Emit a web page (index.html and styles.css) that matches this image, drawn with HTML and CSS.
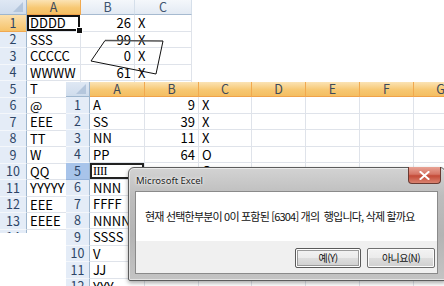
FILE: index.html
```html
<!DOCTYPE html>
<html lang="ko">
<head>
<meta charset="utf-8">
<link rel="stylesheet" href="styles.css">
</head>
<body>
<div class="page">
  <div class="sheet back">
    <div class="corner"><span class="tri"></span></div>
    <div class="ch sel">A</div><div class="ch">B</div><div class="ch">C</div>

    <div class="rh sel">1</div><div class="c a1">DDDD</div><div class="c n">26</div><div class="c">X</div>
    <div class="rh">2</div><div class="c">SSS</div><div class="c n">99</div><div class="c">X</div>
    <div class="rh">3</div><div class="c">CCCCC</div><div class="c n">0</div><div class="c">X</div>
    <div class="rh">4</div><div class="c">WWWW</div><div class="c n">61</div><div class="c">X</div>
    <div class="rh">5</div><div class="c">T</div><div class="c"></div><div class="c"></div>
    <div class="rh">6</div><div class="c">@</div><div class="c"></div><div class="c"></div>
    <div class="rh">7</div><div class="c">EEE</div><div class="c"></div><div class="c"></div>
    <div class="rh">8</div><div class="c">TT</div><div class="c"></div><div class="c"></div>
    <div class="rh">9</div><div class="c">W</div><div class="c"></div><div class="c"></div>
    <div class="rh">10</div><div class="c">QQ</div><div class="c"></div><div class="c"></div>
    <div class="rh">11</div><div class="c">YYYYY</div><div class="c"></div><div class="c"></div>
    <div class="rh">12</div><div class="c">EEE</div><div class="c"></div><div class="c"></div>
    <div class="rh">13</div><div class="c">EEEE</div><div class="c"></div><div class="c"></div>
    <div class="rh">14</div><div class="c">Z</div><div class="c"></div><div class="c"></div>
  </div>

  <svg class="shape" width="444" height="286" viewBox="0 0 444 286">
    <polyline points="105,40.5 163,41" fill="none" stroke="#555" stroke-width="1.6"/>
    <polyline points="163,41 156,74 91,61 105,40.5" fill="none" stroke="#111" stroke-width="1"/>
  </svg>

  <div class="sheet front">
    <div class="corner"><span class="tri"></span></div>
    <div class="ch sel">A</div><div class="ch sel">B</div><div class="ch sel">C</div><div class="ch sel">D</div><div class="ch sel">E</div><div class="ch sel">F</div><div class="ch sel">G</div>

    <div class="rh">1</div><div class="c">A</div><div class="c n">9</div><div class="c">X</div><div class="c"></div><div class="c"></div><div class="c"></div><div class="c"></div>
    <div class="rh">2</div><div class="c">SS</div><div class="c n">39</div><div class="c">X</div><div class="c"></div><div class="c"></div><div class="c"></div><div class="c"></div>
    <div class="rh">3</div><div class="c">NN</div><div class="c n">11</div><div class="c">X</div><div class="c"></div><div class="c"></div><div class="c"></div><div class="c"></div>
    <div class="rh">4</div><div class="c">PP</div><div class="c n">64</div><div class="c">O</div><div class="c"></div><div class="c"></div><div class="c"></div><div class="c"></div>
    <div class="rh act">5</div><div class="c a5">IIII</div><div class="c"></div><div class="c">O</div><div class="c"></div><div class="c"></div><div class="c"></div><div class="c"></div>
    <div class="rh">6</div><div class="c">NNN</div><div class="c"></div><div class="c"></div><div class="c"></div><div class="c"></div><div class="c"></div><div class="c"></div>
    <div class="rh">7</div><div class="c">FFFF</div><div class="c"></div><div class="c"></div><div class="c"></div><div class="c"></div><div class="c"></div><div class="c"></div>
    <div class="rh">8</div><div class="c">NNNNN</div><div class="c"></div><div class="c"></div><div class="c"></div><div class="c"></div><div class="c"></div><div class="c"></div>
    <div class="rh">9</div><div class="c">SSSS</div><div class="c"></div><div class="c"></div><div class="c"></div><div class="c"></div><div class="c"></div><div class="c"></div>
    <div class="rh">10</div><div class="c">V</div><div class="c"></div><div class="c"></div><div class="c"></div><div class="c"></div><div class="c"></div><div class="c"></div>
    <div class="rh">11</div><div class="c">JJ</div><div class="c"></div><div class="c"></div><div class="c"></div><div class="c"></div><div class="c"></div><div class="c"></div>
    <div class="rh">12</div><div class="c">YYY</div><div class="c"></div><div class="c"></div><div class="c"></div><div class="c"></div><div class="c"></div><div class="c"></div>
  </div>

  <div class="dialog">
    <div class="titlebar">
      <span class="title">Microsoft Excel</span>
      <div class="close"><svg width="11" height="9" viewBox="0 0 11 9"><path d="M1.5 1 L9.5 8 M9.5 1 L1.5 8" stroke="#fff" stroke-width="2" stroke-linecap="square"/></svg></div>
    </div>
    <div class="client">
      <div class="msg">현재 선택한부분이 0이 포함된 [6304] 개의&nbsp;&nbsp;행입니다, 삭제 할까요</div>
      <div class="btns">
        <div class="btn def">예(Y)</div>
        <div class="btn">아니요(N)</div>
      </div>
    </div>
  </div>
</div>
</body>
</html>
```

FILE: styles.css
```css
* { box-sizing: border-box; }
html, body { margin: 0; padding: 0; }
body {
  width: 444px;
  height: 286px;
  overflow: hidden;
  background: #fff;
  font-family: "Noto Sans CJK KR", "Noto Sans", sans-serif;
}
.page {
  position: relative;
  width: 444px;
  height: 286px;
  overflow: hidden;
}
.sheet {
  display: grid;
  grid-template-rows: 15px;
  grid-auto-rows: 16.5px;
  background: #fff;
  overflow: hidden;
  font-size: 13px;
  line-height: 1;
  color: #000;
}
.back {
  grid-template-columns: 27px 54px 54px 57px;
  width: 192px;
  height: 233px;
}
.front {
  position: absolute;
  left: 66px;
  top: 82px;
  width: 378px;
  height: 204px;
  grid-template-columns: 24px 55px 54px 53px 54px 54px 54px 54px;
}
.corner {
  position: relative;
  background: linear-gradient(#dfe8f4, #cfdcec);
  border-right: 1px solid #9eb6ce;
  border-bottom: 1px solid #9eb6ce;
}
.tri {
  position: absolute;
  right: 3px;
  bottom: 2px;
  width: 0;
  height: 0;
  border-left: 10px solid transparent;
  border-bottom: 10px solid #b4c6dc;
}
.ch {
  display: flex;
  align-items: center;
  justify-content: center;
  background: linear-gradient(#f4f7fb, #e3eaf3);
  border-right: 1px solid #d5dfea;
  border-bottom: 1px solid #a6bad0;
  color: #3f5470;
  font-size: 12.5px;
  line-height: 1;
}
.ch.sel {
  background: linear-gradient(#fbe3b5, #f7c873 55%, #f4be62);
  border-right: 1px solid #f1a94e;
  border-bottom: 1px solid #f0a24a;
  color: #3d4a5a;
}
.rh {
  display: flex;
  align-items: center;
  justify-content: center;
  background: #e4ecf7;
  border-right: 1px solid #9eb6ce;
  border-bottom: 1px solid #f4f7fb;
  color: #2d4566;
  font-size: 12.5px;
  line-height: 1;
}
.rh.sel {
  background: linear-gradient(#fbe0ad, #f6c36a);
  border-bottom: 1px solid #f0a850;
}
.rh.act {
  background: #a8c4ea;
  border-bottom: 1px solid #94b2da;
}
.c {
  display: flex;
  align-items: center;
  padding: 0 2px 0 3px;
  border-right: 1px solid #dfe3ea;
  border-bottom: 1px solid #dfe3ea;
  white-space: nowrap;
  overflow: visible;
  line-height: 1;
}
.c.n { justify-content: flex-end; padding-right: 3px; }
.a1 {
  position: relative;
  box-shadow: inset 0 0 0 2px #111;
  border-right-color: transparent;
}
.a1::after {
  content: "";
  position: absolute;
  right: -3px;
  bottom: -3px;
  width: 5px;
  height: 5px;
  background: #111;
  border: 1px solid #fff;
}
.a5 {
  box-shadow: inset 0 0 0 2px #222;
  font-family: "Liberation Serif", serif;
  font-size: 12px;
  letter-spacing: -0.5px;
}
.shape {
  position: absolute;
  left: 0;
  top: 0;
  pointer-events: none;
}
.dialog {
  position: absolute;
  left: 128px;
  top: 167px;
  width: 318px;
  height: 114px;
  border: 1px solid #5c5c5c;
  border-radius: 6px 6px 2px 2px;
  background: linear-gradient(#d3d3d3, #bdbdbd 25%, #b4b4b4 60%, #c4c4c4);
  box-shadow: inset 0 0 0 1px rgba(255,255,255,0.55), 0 2px 4px rgba(0,0,0,0.35);
  padding: 0 7px 6px 6px;
  display: flex;
  flex-direction: column;
}
.titlebar {
  position: relative;
  height: 23px;
  flex: none;
  display: flex;
  align-items: center;
}
.title {
  font-family: "Noto Sans", sans-serif;
  font-size: 9.5px;
  line-height: 1;
  color: #1e1e1e;
  padding-left: 1px;
  padding-top: 2px;
  text-shadow: 0 0 4px #fff, 0 0 2px #fff;
}
.close {
  position: absolute;
  right: -3px;
  top: -1px;
  width: 33px;
  height: 17px;
  border: 1px solid #6a3a32;
  border-top: none;
  border-radius: 0 0 4px 4px;
  background: linear-gradient(#e8a395, #d67565 45%, #c44a37 55%, #d9826f);
  display: flex;
  align-items: center;
  justify-content: center;
}
.client {
  flex: 1;
  display: flex;
  flex-direction: column;
  border: 1px solid #8a8a8a;
  background: #f0f0f0;
}
.msg {
  height: 49px;
  flex: none;
  background: #fff;
  display: flex;
  align-items: center;
  padding-left: 9px;
  font-size: 11px;
  line-height: 1;
  letter-spacing: -0.8px;
  color: #111;
  white-space: nowrap;
}
.btns {
  flex: 1;
  display: flex;
  justify-content: flex-end;
  align-items: flex-start;
  gap: 6px;
  padding: 7px 2px 0 0;
}
.btn {
  width: 66px;
  height: 20px;
  border: 1px solid #707070;
  border-radius: 2px;
  background: linear-gradient(#f3f3f3, #ebebeb 50%, #dddddd 51%, #cfcfcf);
  box-shadow: inset 0 0 0 1px #fcfcfc;
  display: flex;
  align-items: center;
  justify-content: center;
  font-size: 10px;
  line-height: 1;
  letter-spacing: -0.6px;
  color: #111;
}
.btn + .btn { width: 68px; }
.btn.def { border-color: #5a5a5a; box-shadow: inset 0 0 0 1px #fff, inset 0 0 0 2px #9a9a9a; }
```
